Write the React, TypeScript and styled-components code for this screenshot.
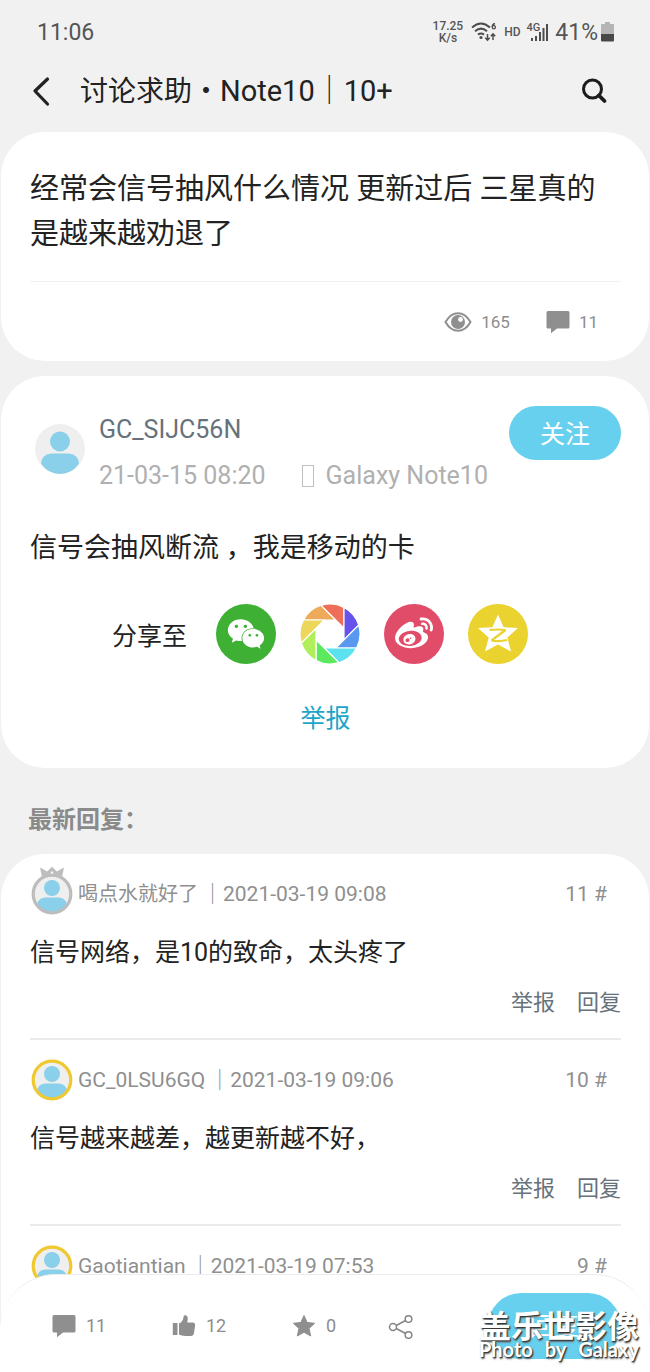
import React from 'react';
import styled, { createGlobalStyle } from 'styled-components';
import { FaWeibo, FaWeixin } from 'react-icons/fa';

const GlobalStyle = createGlobalStyle`
  * { box-sizing: border-box; }
  body {
    margin: 0;
    background: #f1f1f1;
    font-family: Roboto, "Noto Sans CJK SC", sans-serif;
    color: #222;
  }
  h1, h2, p { margin: 0; font-weight: 400; }
  button {
    border: 0;
    padding: 0;
    background: none;
    font: inherit;
    color: inherit;
    cursor: pointer;
  }
  svg { display: block; flex: none; }
`;

const Screen = styled.div`
  position: relative;
  display: flex;
  flex-direction: column;
  height: 100vh;
  overflow: hidden;
`;

const StatusBar = styled.div`
  display: flex;
  align-items: center;
  justify-content: space-between;
  flex: none;
  height: 64px;
  padding: 0 36px 0 37px;
  font-size: 23px;
  color: #555;
`;

const StatusIcons = styled.div`
  display: flex;
  align-items: center;
  gap: 6px;
`;

const Speed = styled.div`
  margin-right: 2px;
  font-size: 12px;
  line-height: 12px;
  font-weight: 500;
  text-align: center;
`;

const Hd = styled.span`
  font-size: 12px;
  font-weight: 500;
`;

const Power = styled.div`
  display: flex;
  align-items: center;
  gap: 3px;
`;

const Mobile = styled.div`
  display: flex;
  align-items: center;
  height: 20px;
  font-size: 11px;
  line-height: 12px;
  font-weight: 500;
  span { align-self: flex-start; }
  svg { margin-left: -9px; }
`;

const TitleBar = styled.header`
  display: flex;
  align-items: center;
  flex: none;
  height: 56px;
  margin-bottom: 12px;
  padding: 0 42px 2px 30px;
`;

const PageTitle = styled.h1`
  flex: 1;
  margin-left: 26px;
  font-size: 28px;
  line-height: 40px;
  white-space: nowrap;
`;

const Model = styled.span`
  font-size: 29px;
`;

const Scroller = styled.main`
  flex: 1;
  min-height: 0;
  overflow-y: auto;
  scrollbar-width: none;
`;

const Card = styled.section`
  margin: 0 1px 15px;
  padding: 0 28px 0 29px;
  background: #fff;
  border-radius: 44px;
`;

const TopicCard = styled(Card)`
  padding-top: 35px;
`;

const TopicText = styled.h2`
  font-size: 29px;
  line-height: 45px;
  padding-bottom: 24px;
  border-bottom: 1px solid #f2f2f2;
`;

const Stats = styled.div`
  display: flex;
  justify-content: flex-end;
  align-items: center;
  gap: 36px;
  height: 79px;
  padding-right: 23px;
`;

const Stat = styled.span`
  display: flex;
  align-items: center;
  gap: 9px;
  font-size: 17px;
  color: #8d8d8d;
`;

const PostCard = styled(Card)`
  padding-top: 30px;
  padding-bottom: 29px;
`;

const Author = styled.div`
  display: flex;
  align-items: flex-start;
`;

const AuthorAvatar = styled.div`
  margin: 18px 14px 0 5px;
`;

const AuthorInfo = styled.div`
  flex: 1;
  white-space: nowrap;
`;

const AuthorName = styled.div`
  font-size: 25px;
  line-height: 48px;
  color: #66727b;
`;

const AuthorMeta = styled.div`
  display: flex;
  align-items: center;
  font-size: 25px;
  line-height: 44px;
  color: #b0b0b0;
`;

const DeviceMark = styled.span`
  width: 12px;
  height: 22px;
  margin: 0 12px 0 36px;
  border: 1px solid #c0c0c0;
`;

const Pill = styled.button<{ $large?: boolean }>`
  flex: none;
  width: ${p => (p.$large ? 133 : 112)}px;
  height: ${p => (p.$large ? 66 : 54)}px;
  padding-bottom: 3px;
  border-radius: 33px;
  background: #66d0ee;
  color: #fff;
  font-size: 25px;
`;

const PostText = styled.p`
  margin-top: 29px;
  font-size: 27px;
  line-height: 42px;
`;

const Share = styled.div`
  display: flex;
  align-items: center;
  gap: 24px;
  margin: 35px 0 35px 82px;
  font-size: 25px;
`;

const ShareLabel = styled.span`
  margin-right: 5px;
`;

const ShareButton = styled.button<{ $color?: string }>`
  display: flex;
  align-items: center;
  justify-content: center;
  width: 60px;
  height: 60px;
  border-radius: 30px;
  background: ${p => p.$color || 'none'};
  color: #fff;
`;

const Report = styled.button`
  display: block;
  margin: 0 auto;
  font-size: 25px;
  line-height: 40px;
  color: #1ba5c8;
`;

const SectionTitle = styled.h2`
  margin: 32px 28px 14px;
  font-size: 24px;
  line-height: 40px;
  font-weight: 700;
  color: #8a8a8a;
`;

const ReplyList = styled(Card)`
  margin-bottom: 0;
  padding-bottom: 97px;
  border-bottom-left-radius: 0;
  border-bottom-right-radius: 0;
`;

const ReplyItem = styled.article`
  padding: 20px 0 19px;
  border-bottom: 2px solid #ebebeb;
  &:last-child { border-bottom: 0; padding-bottom: 0; }
`;

const ReplyHead = styled.div`
  display: flex;
  align-items: center;
  height: 40px;
  padding: 0 14px 0 2px;
  font-size: 21px;
  line-height: 24px;
  color: #8f8f8f;
  white-space: nowrap;
`;

const ReplyName = styled.span<{ $cjk?: boolean }>`
  margin: 0 4px 0 6px;
  font-size: ${p => (p.$cjk ? 20 : 21)}px;
`;

const Floor = styled.span`
  margin-left: auto;
`;

const ReplyText = styled.p`
  margin-top: 20px;
  font-size: 25px;
  line-height: 38px;
`;

const ReplyActions = styled.div`
  display: flex;
  justify-content: flex-end;
  gap: 22px;
  margin-top: 15px;
  font-size: 22px;
  line-height: 32px;
  color: #67727a;
`;

const BottomBar = styled.footer`
  position: absolute;
  left: 0;
  right: 0;
  bottom: 0;
  display: flex;
  align-items: center;
  height: 98px;
  padding: 4px 29px 0 52px;
  background: #fff;
  border-top: 1px solid #ececec;
  border-radius: 56px 56px 0 0;
`;

const BarItem = styled.button`
  display: flex;
  align-items: center;
  gap: 10px;
  width: 120px;
  font-size: 18px;
  color: #8d8d8d;
`;

const ShareItem = styled(BarItem)`
  width: auto;
  margin-left: -24px;
  margin-right: auto;
`;

const Watermark = styled.div`
  position: absolute;
  right: 11px;
  bottom: 14px;
  color: #fff;
  text-shadow: 1px 1px 1px #333, 1px 2px 2px #666;
  white-space: nowrap;
`;

const WatermarkName = styled.div`
  font-size: 32px;
  line-height: 26px;
  font-weight: 700;
`;

const WatermarkLine = styled.div`
  display: flex;
  justify-content: space-between;
  font-family: Lato, sans-serif;
  font-size: 20px;
  line-height: 18px;
  font-weight: 700;
`;

const CommentIcon = () => (
  <svg width="24" height="24" viewBox="0 0 24 24" fill="#8f8f8f">
    <path d="M2 1h20q1.500 0 1.500 1.500v14.500q0 1.500-1.500 1.500H11l-6 4.800v-4.800H2q-1.500 0-1.500-1.500V2.500Q.5 1 2 1z" />
  </svg>
);

const EyeIcon = () => (
  <svg width="28" height="22" viewBox="0 0 28 22">
    <path d="M1.500 11Q6.500 2.200 14 2.200T26.500 11Q21.500 19.800 14 19.800T1.500 11z" fill="#fff" stroke="#8f8f8f" strokeWidth="2" />
    <circle cx="14" cy="11" r="7" fill="#8f8f8f" />
    <circle cx="16.500" cy="8.500" r="2.400" fill="#fff" />
  </svg>
);

const LikeIcon = () => (
  <svg width="24" height="24" viewBox="0 0 24 24" fill="#8f8f8f">
    <path d="M.8 9h4.700v12H.8z" />
    <path d="M7 9.500c2.700-1 4.200-3.300 4.500-6.500C11.600 1.600 12.500 1 13.500 1.200c2 .4 2.500 2.500 2.200 4.300L15.200 8.500h5.300c1.900 0 2.900 1.200 2.600 2.900l-1.200 8c-.3 1.700-1.300 2.400-2.900 2.500-4 .3-8.500.2-12-1.400z" />
  </svg>
);

const StarIcon = () => (
  <svg width="24" height="24" viewBox="0 0 24 24" fill="#8f8f8f" stroke="#8f8f8f" strokeWidth="1" strokeLinejoin="round">
    <path d="M12 1.500l3.100 7 7.600.8-5.700 5.100 1.700 7.600L12 18.200 5.300 22 7 14.400 1.300 9.300l7.600-.8z" />
  </svg>
);

const ShareIcon = () => (
  <svg width="26" height="26" viewBox="0 0 26 26" fill="none" stroke="#858585" strokeWidth="1.500">
    <circle cx="5" cy="14" r="3.500" />
    <circle cx="20.500" cy="6" r="3.300" />
    <circle cx="20.500" cy="22" r="3.300" />
    <path d="M8.200 12.500l9.400-5M8.200 15.500l9.400 5" />
  </svg>
);

const BackIcon = () => (
  <svg width="24" height="32" viewBox="0 0 24 32" fill="none" stroke="#222" strokeWidth="3.200" strokeLinecap="round" strokeLinejoin="round">
    <path d="M17.500 4L5 16l12.500 13" />
  </svg>
);

const SearchIcon = () => (
  <svg width="28" height="28" viewBox="0 0 28 28" fill="none" stroke="#1c1c1c" strokeWidth="3">
    <circle cx="12.500" cy="12" r="9" />
    <path d="M19 18.500l5.500 5.500" strokeWidth="3.800" strokeLinecap="round" />
  </svg>
);

const WifiIcon = () => (
  <svg width="27" height="22" viewBox="0 0 27 22" fill="none" stroke="#4d4d4d" strokeWidth="2">
    <path d="M1 6.500Q10 -1.500 19 6.500M4 10.200Q10 5 16 10.200M7 13.600Q10 11.300 13 13.600" />
    <circle cx="10" cy="16.500" r="1.600" fill="#4d4d4d" stroke="none" />
    <path d="M16.500 13v6M14.300 16.800l2.200 2.400 2.200-2.400M22 19v-6M19.800 15.200L22 12.800l2.200 2.400" strokeWidth="1.500" />
    <path d="M24 2.500Q21.300 3 21.200 6" strokeWidth="1.300" />
    <circle cx="22.800" cy="6.300" r="1.600" strokeWidth="1.300" />
  </svg>
);

const SignalIcon = () => (
  <svg width="18" height="20" viewBox="0 0 18 20" fill="#4d4d4d">
    <path d="M0 16h2v3H0zM4 14h2v5H4zM8 10h2v9H8zM11.500 6h2v13h-2zM15 2h2v17h-2z" />
  </svg>
);

const BatteryIcon = () => (
  <svg width="13" height="20" viewBox="0 0 13 20">
    <path d="M4 0h5v2h3q1 0 1 1v10H0V3q0-1 1-1h3z" fill="#b5b5b5" />
    <path d="M0 12h13v6.500q0 1-1 1H1q-1 0-1-1z" fill="#484848" />
  </svg>
);

const blades = ['#eeaa5b', '#ee6f58', '#6653ec', '#5898ee', '#5ce2ee', '#5de95e', '#b0ef5b', '#edd75a'];

const MomentsIcon = () => (
  <svg width="60" height="60" viewBox="-30 -30 60 60">
    {blades.map((color, i) => (
      <path
        key={color}
        d="M5.800-14H-26.500A30 30 0 0 1-8.900-28.700z"
        fill={color}
        stroke="#fff"
        strokeWidth="1.200"
        transform={`rotate(${i * 45})`}
      />
    ))}
  </svg>
);

const QzoneIcon = () => (
  <svg width="42" height="42" viewBox="0 0 42 42">
    <path d="M21 1.500l5.600 12.700 14.400.8-10.700 9.600L34 38.500 21 31.500 8 38.500l3.700-13.900L1 15l14.400-.8z" fill="#fff" />
    <path d="M12.500 17q8.500-1 16 0L14.500 27.500q8 1.300 15.500-.5" fill="none" stroke="#ead22f" strokeWidth="2.200" strokeLinejoin="bevel" />
  </svg>
);

const Avatar = ({ size, ring, crown }: { size: number; ring?: string; crown?: boolean }) => (
  <svg width={size} height={size} viewBox="0 0 50 50" overflow="visible">
    {crown && <path d="M13 6L10-8l9 5 6-6 6 6 9-5-3 14z M25-4l-4 7h8z" fill="#bdbdbd" fillRule="evenodd" />}
    <circle cx="25" cy="25" r="25" fill="#efefef" />
    <circle cx="25" cy="17.500" r="10" fill="#8ad0ea" />
    <path d="M16 29.500h18q9 1 10 10Q37 50 25 50T6 39.500q1-9 10-10z" fill="#8ad0ea" />
    {ring && <circle cx="25" cy="25" r="23.500" fill="none" stroke={ring} strokeWidth="4" />}
  </svg>
);

type Reply = {
  name: string;
  date: string;
  floor: number;
  ring: string;
  text?: string;
  crown?: boolean;
  cjk?: boolean;
};

const replies: Reply[] = [
  { name: '喝点水就好了', date: '2021-03-19 09:08', floor: 11, ring: '#bdbdbd', text: '信号网络，是10的致命，太头疼了', crown: true, cjk: true },
  { name: 'GC_0LSU6GQ', date: '2021-03-19 09:06', floor: 10, ring: '#efc92f', text: '信号越来越差，越更新越不好，' },
  { name: 'Gaotiantian', date: '2021-03-19 07:53', floor: 9, ring: '#efc92f' },
];

export default function App() {
  return (
    <>
      <GlobalStyle />
      <Screen>
        <StatusBar>
          <time>11:06</time>
          <StatusIcons>
            <Speed>17.25<br />K/s</Speed>
            <WifiIcon />
            <Hd>HD</Hd>
            <Mobile><span>4G</span><SignalIcon /></Mobile>
            <Power>41%<BatteryIcon /></Power>
          </StatusIcons>
        </StatusBar>
        <TitleBar>
          <button aria-label="返回"><BackIcon /></button>
          <PageTitle>讨论求助・<Model>Note10｜10+</Model></PageTitle>
          <button aria-label="搜索"><SearchIcon /></button>
        </TitleBar>
        <Scroller>
          <TopicCard>
            <TopicText>经常会信号抽风什么情况 更新过后 三星真的是越来越劝退了</TopicText>
            <Stats>
              <Stat><EyeIcon />165</Stat>
              <Stat><CommentIcon />11</Stat>
            </Stats>
          </TopicCard>
          <PostCard>
            <Author>
              <AuthorAvatar><Avatar size={50} /></AuthorAvatar>
              <AuthorInfo>
                <AuthorName>GC_SIJC56N</AuthorName>
                <AuthorMeta>21-03-15 08:20<DeviceMark />Galaxy Note10</AuthorMeta>
              </AuthorInfo>
              <Pill>关注</Pill>
            </Author>
            <PostText>信号会抽风断流 ，我是移动的卡</PostText>
            <Share>
              <ShareLabel>分享至</ShareLabel>
              <ShareButton $color="#3eb135" aria-label="微信"><FaWeixin size={38} /></ShareButton>
              <ShareButton aria-label="朋友圈"><MomentsIcon /></ShareButton>
              <ShareButton $color="#e14d69" aria-label="微博"><FaWeibo size={38} /></ShareButton>
              <ShareButton $color="#ead22f" aria-label="QQ空间"><QzoneIcon /></ShareButton>
            </Share>
            <Report>举报</Report>
          </PostCard>
          <SectionTitle>最新回复：</SectionTitle>
          <ReplyList>
            {replies.map(r => (
              <ReplyItem key={r.floor}>
                <ReplyHead>
                  <Avatar size={40} ring={r.ring} crown={r.crown} />
                  <ReplyName $cjk={r.cjk}>{r.name}</ReplyName>
                  <span>｜{r.date}</span>
                  <Floor>{r.floor} #</Floor>
                </ReplyHead>
                {r.text && (
                  <>
                    <ReplyText>{r.text}</ReplyText>
                    <ReplyActions>
                      <button>举报</button>
                      <button>回复</button>
                    </ReplyActions>
                  </>
                )}
              </ReplyItem>
            ))}
          </ReplyList>
        </Scroller>
        <BottomBar>
          <BarItem><CommentIcon />11</BarItem>
          <BarItem><LikeIcon />12</BarItem>
          <BarItem><StarIcon />0</BarItem>
          <ShareItem aria-label="分享"><ShareIcon /></ShareItem>
          <Pill $large>回复</Pill>
        </BottomBar>
        <Watermark>
          <WatermarkName>盖乐世影像</WatermarkName>
          <WatermarkLine>
            <span>Photo</span> <span>by</span> <span>Galaxy</span>
          </WatermarkLine>
        </Watermark>
      </Screen>
    </>
  );
}
